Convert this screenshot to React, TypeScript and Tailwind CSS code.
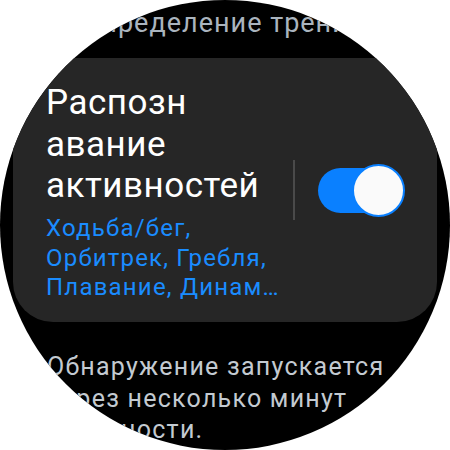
import React from 'react';

const Toggle: React.FC<{ on: boolean }> = ({ on }) => (
  <div className="relative w-[87px] h-[53px] shrink-0">
    <div className={`absolute left-0 top-[4px] h-[45px] w-[84px] rounded-full ${on ? 'bg-[#0a80ff]' : 'bg-[#555]'}`} />
    <div className="absolute right-0 top-0 w-[53px] h-[53px] rounded-full bg-[#fafafa] border-[2.5px] border-[#0a80ff]" />
  </div>
);

export default function App() {
  return (
    <div className="w-[450px] h-[450px] bg-white" style={{ fontFamily: 'Roboto, "Noto Sans", sans-serif' }}>
      <div className="w-[450px] h-[450px] rounded-full overflow-hidden bg-black">
        <div className="flex flex-col">
          <div className="pt-[7px] h-[58px] flex justify-center text-[27px] leading-[32px] tracking-[1px] text-[#aab4be] whitespace-nowrap">
            Автоопределение тренировок
          </div>

          <div className="mx-[13px] rounded-[40px] bg-[#262626] h-[264px] pt-[24px] pl-[33px] pr-[32px] flex items-start">
            <div className="w-[237px] shrink-0">
              <div className="text-[35px] leading-[41.5px] tracking-[0.5px] text-white">
                Распозн
                <br />
                авание
                <br />
                активностей
              </div>
              <div className="mt-[7.5px] text-[24px] leading-[29.5px] tracking-[1.2px] text-[#1a8cff]">
                <div>Ходьба/бег,</div>
                <div>Орбитрек, Гребля,</div>
                <div className="truncate">Плавание, Динамическая тренировка, Другие тренировки</div>
              </div>
            </div>
            <div className="self-center -mt-[24px] flex items-center">
              <div className="ml-[10px] w-[2px] h-[60px] bg-[#4a4a4a] shrink-0" />
              <div className="ml-[23px]">
                <Toggle on />
              </div>
            </div>
          </div>

          <div className="mt-[29px] pl-[47px] pr-[24px] text-[25px] leading-[31.5px] tracking-[1.25px] text-[#c3cad1]">
            Обнаружение запускается через несколько минут активности.
          </div>
        </div>
      </div>
    </div>
  );
}
